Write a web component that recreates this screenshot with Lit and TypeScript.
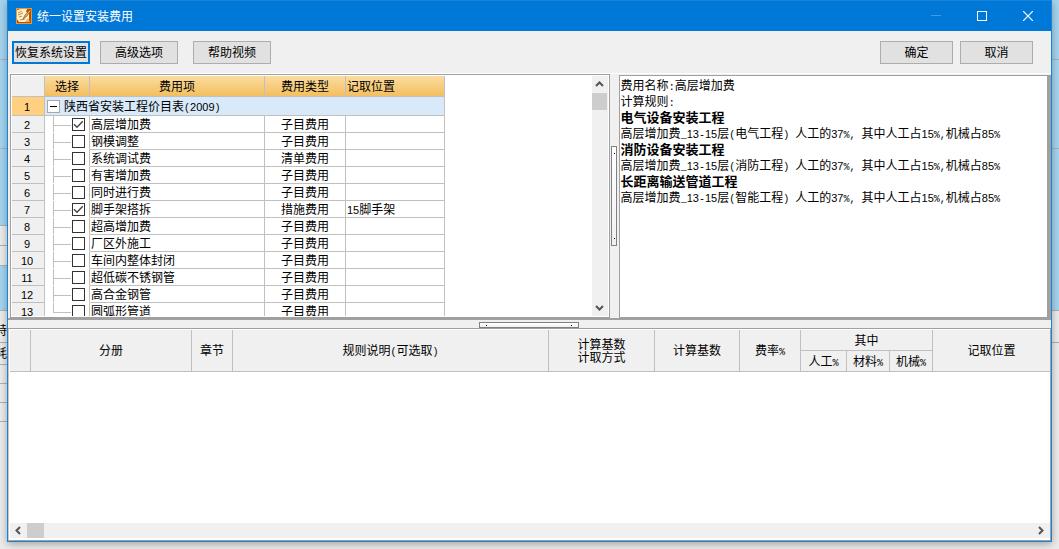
import { LitElement, html, css, svg } from "lit";
import { customElement, state } from "lit/decorators.js";

interface FeeRow {
  name: string;
  kind: string;
  place: string;
  checked: boolean;
}

const fee = (name: string, kind = "子目费用", checked = false, place = ""): FeeRow => ({ name, kind, place, checked });

const FEES: FeeRow[] = [
  fee("高层增加费", "子目费用", true),
  fee("钢模调整"),
  fee("系统调试费", "清单费用"),
  fee("有害增加费"),
  fee("同时进行费"),
  fee("脚手架搭拆", "措施费用", true, "15脚手架"),
  fee("超高增加费"),
  fee("厂区外施工"),
  fee("车间内整体封闭"),
  fee("超低碳不锈钢管"),
  fee("高合金钢管"),
  fee("圆弧形管道"),
];

const RULES = [
  ["电气设备安装工程", "电气工程"],
  ["消防设备安装工程", "消防工程"],
  ["长距离输送管道工程", "智能工程"],
];

/* Half-width characters take a six pixel cell beside the twelve pixel Chinese ones. */
const mix = (text: string) =>
  text
    .split(/(\d+|[\x20-\x2f:_]+)/)
    .filter((p) => p)
    .map((p) =>
      /^\d/.test(p)
        ? html`<span class="digits">${p}</span>`
        : /^[\x20-\x2f:_]/.test(p)
        ? html`<span class="half">${p}</span>`
        : p
    );

const chevron = (d: string) =>
  html`<svg width="9" height="9" viewBox="0 0 9 9" aria-hidden="true">
    ${svg`<path d=${d} fill="none" stroke="#555" stroke-width="2"/>`}
  </svg>`;

@customElement("app-root")
export class AppRoot extends LitElement {
  @state() private rows = FEES;

  static styles = css`
    :host {
      display: block;
      position: relative;
      height: 100vh;
      overflow: hidden;
      background: #ececec;
      color: #000;
      font: 12px/16px "Noto Sans CJK SC", "Liberation Sans", sans-serif;
    }
    * { box-sizing: border-box; }
    button { font: inherit; color: inherit; padding: 0; margin: 0; border-radius: 0; }
    .digits { font-family: "Liberation Sans", sans-serif; font-size: 11px; line-height: 1; }
    .half { font-family: "Liberation Mono", monospace; font-size: 10px; line-height: 1; white-space: pre; }

    .behind { position: absolute; inset: 0; display: flex; justify-content: space-between; }
    .strip { width: 12px; overflow: hidden; display: flex; flex-direction: column; }
    .strip div { flex: none; border-bottom: 1px solid #b0aeb0; overflow: hidden; white-space: nowrap; text-indent: -5px; }
    .sky { background: #a5d5f0; }
    .h1 { height: 60px; } .h2 { height: 89px; } .h3 { height: 77px; }
    .h4 { height: 20px; } .h5 { height: 45px; } .h6 { height: 32px; }
    .h7 { height: 22px; } .h8 { height: 19px; } .h9 { height: 162px; }
    .low { padding-top: 11px; }
    .low2 { padding-top: 2px; }

    .window {
      position: relative;
      margin: 0 7px;
      height: calc(100vh - 7px);
      display: flex;
      flex-direction: column;
      border: 1px solid #1883d7;
      background: #f0f0f0;
      box-shadow: 0 2px 8px rgba(0, 0, 0, 0.32);
    }
    .title { flex: none; height: 30px; display: flex; align-items: center; background: #0078d7; color: #fff; padding-left: 8px; }
    .title svg { display: block; }
    .title h1 { flex: 1; margin: 0 0 0 5px; font-size: 12px; font-weight: 400; }
    .title button { width: 46px; height: 30px; border: 0; background: none; display: grid; place-items: center; }

    .tools { flex: none; display: flex; padding: 10px 18px 9px 4px; }
    .tools button { width: 78px; height: 23px; border: 1px solid #adadad; background: #e1e1e1; line-height: 19px; padding-bottom: 2px; white-space: nowrap; margin-right: 10px; }
    .tools .main { border: 2px solid #0078d7; line-height: 17px; }
    .tools .opts { margin-right: 15px; }
    .tools .act { width: 73px; margin-right: 7px; }
    .tools .act:last-child { margin-right: 0; }
    .space { flex: 1; }

    .upper { flex: none; height: 247px; display: flex; border-top: 1px solid #fff; border-bottom: 2px solid #a0a0a0; padding-left: 2px; }
    .fees { flex: none; width: 57.6%; display: flex; border: 1px solid #a0a0a0; background: #fff; padding: 1px; overflow: hidden; }
    .fees .scroll { flex: 1; overflow: hidden; }
    .bar { background: #f0f0f0; display: flex; align-items: center; }
    .bar.v { width: 16px; flex-direction: column; padding-right: 1px; }
    .bar button { border: 0; background: none; display: grid; place-items: center; width: 17px; height: 17px; flex: none; }
    .bar.v button { width: 15px; }
    .bar i { background: #cdcdcd; flex: none; }
    .bar.v i { width: 15px; height: 17px; }
    .bar.h { flex: none; height: 15px; margin-bottom: 2px; padding-right: 1px; }
    .bar.h i { width: 17px; height: 15px; }
    .bar.h button { height: 15px; }

    .split { display: grid; place-items: center; flex: none; }
    .split.v { width: 9px; }
    .split.h { height: 8px; padding: 1px 2px 0 0; }
    .grip { border: 1px solid #808080; display: flex; justify-content: space-between; align-items: center; background: linear-gradient(#fff, #f0f0f0); }
    .grip::before, .grip::after { content: ""; width: 1px; height: 1px; background: #000080; }
    .v .grip { width: 6px; height: 100px; flex-direction: column; padding: 6px 0 6px 1px; }
    .h .grip { width: 100px; height: 6px; padding: 1px 6px 0; }

    .rules { flex: 1; min-width: 0; margin-top: 1px; border: 1px solid #a0a0a0; border-right-width: 4px; background: #fff; padding: 1px; overflow: hidden; }
    .rules p, .rules h2 { margin: 0; font-size: 12px; line-height: 16px; font-weight: 400; white-space: nowrap; }
    .rules h2 { font-size: 13px; font-weight: 700; }

    table { border-collapse: separate; border-spacing: 0; table-layout: fixed; }
    th, td { padding: 0; font-weight: 400; border: solid #c0c0c0; border-width: 0 1px 1px 0; text-align: center; white-space: nowrap; overflow: hidden; }
    .tree { width: 433px; }
    .tree thead th { height: 21px; background: linear-gradient(#fbdca0, #f3bf5f); }
    .tree thead th.corner, .tree tbody th { background: #f0f0f0; }
    .tree tbody th { padding-right: 2px; }
    .tree td, .tree tbody th { height: 17px; line-height: 16px; }
    .tree .txt { text-align: left; padding-left: 1px; }
    .tree .group th { height: 19px; background: #ffd07f; }
    .tree .group td { background: #d8eaf9; height: 19px; text-align: left; }
    .group div { display: flex; align-items: center; gap: 4px; padding-left: 2px; height: 18px; }
    .group button { width: 13px; height: 13px; border: 1px solid #a8a8a8; background: #fff; display: grid; place-items: center; }
    .tree .pick { border-bottom-color: transparent; line-height: 0; }
    .limb { display: flex; height: 16px; margin-left: 8px; position: relative; }
    .limb::before { content: ""; width: 18px; height: 9px; border-bottom: 1px solid #c0c0c0; }
    .limb::after { content: ""; position: absolute; left: 0; top: 0; width: 1px; height: 17px; background: #c0c0c0; }
    .last .limb::after { height: 9px; }
    .limb input { appearance: none; width: 13px; height: 13px; margin: 2px 0 0 1px; border: 1px solid #333; background: #fff; }
    .limb input:checked {
      background: #fff url("data:image/svg+xml,%3Csvg xmlns='http://www.w3.org/2000/svg' viewBox='0 0 11 11'%3E%3Cpath d='M1 5.3 4 8.3 9.8 2.3' fill='none' stroke='%23444' stroke-width='1.4'/%3E%3C/svg%3E");
    }

    .lower { flex: 1; min-height: 0; display: flex; flex-direction: column; border: 1px solid #a0a0a0; border-left-color: #c8c8c8; background: #fff; padding: 1px 0 0 1px; }
    .books { width: 100%; }
    .books th { background: #f0f0f0; height: 21px; line-height: 16px; padding-bottom: 1px; }
    .books .end { border-right: 0; }
    .books .two { line-height: 13px; }
    .fill { flex: 1; }
    .w33 { width: 33px; } .w45 { width: 45px; } .w175 { width: 175px; } .w81 { width: 81px; } .w99 { width: 99px; }
    .b1 { width: 21px; } .b2 { width: 161px; } .b3 { width: 41px; } .b4 { width: 316px; } .b5 { width: 106px; }
    .b6 { width: 85px; } .b7 { width: 61px; } .b8 { width: 46px; } .b9 { width: 43px; }
  `;

  private toggle(i: number) {
    this.rows = this.rows.map((r, n) => (n === i ? { ...r, checked: !r.checked } : r));
  }

  private behind() {
    return html`<div class="behind" aria-hidden="true">
      <div class="strip">
        <div class="sky h1"></div><div class="sky h2"></div><div class="sky h3"></div>
        <div class="h4"></div><div class="h4"></div><div class="sky h5"></div>
        <div class="h6 low">特征</div><div class="h7 low2">耗工</div>
        <div class="h8"></div><div class="h8"></div><div class="h8"></div>
      </div>
      <div class="strip">
        <div class="sky h1"></div><div class="sky h2"></div><div class="sky h9"></div><div class="h6"></div>
      </div>
    </div>`;
  }

  private titleBar() {
    return html`<header class="title">
      <svg width="16" height="16" viewBox="0 0 16 16" aria-hidden="true">
        <rect width="16" height="16" fill="#f0962a" />
        <rect x="1" y="1" width="14" height="14" fill="#a8541a" />
        <path d="M1 2 5 1 11 1 10 4 13 5 13 12 9 14 3 14 1 11Z" fill="#fff3d6" />
        <path d="M14.500 1 9 7 7 11 10 9 15 3Z" fill="#f2a93b" stroke="#8a3c0c" stroke-width=".6" />
        <path d="M2 5 6 3M2 7 7 5M3 9 6 8M4 12 9 11" stroke="#b4641c" stroke-width=".8" fill="none" />
        <path d="M12 10 14 14 9 14Z" fill="#f6b24a" />
      </svg>
      <h1>统一设置安装费用</h1>
      <button aria-label="最小化" disabled>
        <svg width="10" height="10"><path d="M0 4.5H10" stroke="#3f9be3" /></svg>
      </button>
      <button aria-label="最大化">
        <svg width="10" height="10"><rect x=".5" y=".5" width="9" height="9" fill="none" stroke="#fff" /></svg>
      </button>
      <button aria-label="关闭">
        <svg width="10" height="10"><path d="M0 0 10 10M10 0 0 10" stroke="#fff" stroke-width="1.2" /></svg>
      </button>
    </header>`;
  }

  private feeTable() {
    return html`<table class="tree">
      <colgroup><col class="w33" /><col class="w45" /><col class="w175" /><col class="w81" /><col class="w99" /></colgroup>
      <thead>
        <tr><th class="corner"></th><th>选择</th><th>费用项</th><th>费用类型</th><th class="txt">记取位置</th></tr>
      </thead>
      <tbody>
        <tr class="group">
          <th>${mix("1")}</th>
          <td colspan="4">
            <div>
              <button aria-label="折叠"><svg width="9" height="9"><path d="M1 4.5H8" stroke="#000" /></svg></button>
              <span>${mix("陕西省安装工程价目表(2009)")}</span>
            </div>
          </td>
        </tr>
        ${this.rows.map(
          (r, i) => html`<tr class=${i === this.rows.length - 1 ? "last" : ""}>
            <th>${mix(String(i + 2))}</th>
            <td class="pick">
              <div class="limb"><input type="checkbox" id="fee${i}" .checked=${r.checked} @change=${() => this.toggle(i)} /></div>
            </td>
            <td class="txt"><label for="fee${i}">${r.name}</label></td>
            <td>${r.kind}</td>
            <td class="txt">${mix(r.place)}</td>
          </tr>`
        )}
      </tbody>
    </table>`;
  }

  private bookTable() {
    return html`<table class="books">
      <colgroup>
        <col class="b1" /><col class="b2" /><col class="b3" /><col class="b4" /><col class="b5" /><col class="b6" />
        <col class="b7" /><col class="b8" /><col class="b9" /><col class="b9" /><col />
      </colgroup>
      <thead>
        <tr>
          <th rowspan="2"></th><th rowspan="2">分册</th><th rowspan="2">章节</th>
          <th rowspan="2">${mix("规则说明(可选取)")}</th>
          <th rowspan="2" class="two">计算基数<br />计取方式</th>
          <th rowspan="2">计算基数</th><th rowspan="2">${mix("费率%")}</th>
          <th colspan="3">其中</th><th rowspan="2" class="end">记取位置</th>
        </tr>
        <tr><th>${mix("人工%")}</th><th>${mix("材料%")}</th><th>${mix("机械%")}</th></tr>
      </thead>
    </table>`;
  }

  render() {
    return html`
      ${this.behind()}
      <main class="window">
        ${this.titleBar()}
        <nav class="tools">
          <button class="main">恢复系统设置</button>
          <button class="opts">高级选项</button>
          <button>帮助视频</button>
          <span class="space"></span>
          <button class="act">确定</button>
          <button class="act">取消</button>
        </nav>
        <section class="upper">
          <div class="fees">
            <div class="scroll">${this.feeTable()}</div>
            <div class="bar v">
              <button aria-label="向上">${chevron("M1 6 4.5 2.5 8 6")}</button>
              <i></i><span class="space"></span>
              <button aria-label="向下">${chevron("M1 3 4.5 6.5 8 3")}</button>
            </div>
          </div>
          <div class="split v"><span class="grip"></span></div>
          <article class="rules">
            <p>${mix("费用名称:高层增加费")}</p>
            <p>${mix("计算规则:")}</p>
            ${RULES.map(
              ([head, part]) => html`<h2>${head}</h2>
                <p>${mix(`高层增加费_13-15层(${part}) 人工的37%, 其中人工占15%,机械占85%`)}</p>`
            )}
          </article>
        </section>
        <div class="split h"><span class="grip"></span></div>
        <section class="lower">
          ${this.bookTable()}
          <div class="fill"></div>
          <div class="bar h">
            <button aria-label="向左">${chevron("M6 1 2.5 4.5 6 8")}</button>
            <i></i><span class="space"></span>
            <button aria-label="向右">${chevron("M3 1 6.5 4.5 3 8")}</button>
          </div>
        </section>
      </main>
    `;
  }
}
